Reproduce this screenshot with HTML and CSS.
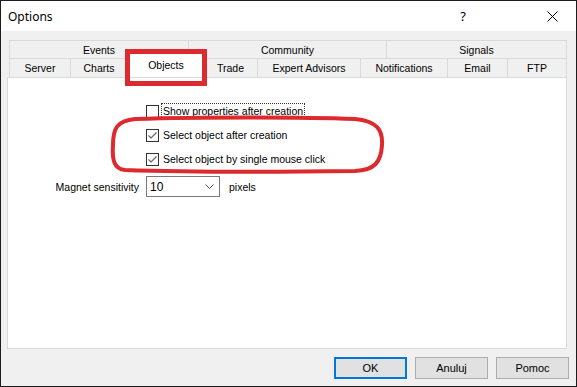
FILE: index.html
```html
<!DOCTYPE html>
<html lang="en">

<head>
    <meta charset="UTF-8">
    <title>Options</title>
    <link rel="stylesheet" href="styles.css">
</head>

<body>

    <div class="window">
        <div class="titlebar">
            <span class="title">Options</span>
            <span class="help">?</span>
            <svg class="close" width="11" height="11" viewBox="0 0 11 11">
                <path d="M0.5 0.5 L10.5 10.5 M10.5 0.5 L0.5 10.5" stroke="#000" stroke-width="1" fill="none"/>
            </svg>
        </div>

        <div class="client">
            <div class="tabs">
                <div class="tab-row back">
                    <div class="tab">Events</div>
                    <div class="tab">Community</div>
                    <div class="tab">Signals</div>
                </div>
                <div class="tab-row front">
                    <div class="tab">Server</div>
                    <div class="tab">Charts</div>
                    <div class="tab selected">Objects</div>
                    <div class="tab">Trade</div>
                    <div class="tab">Expert Advisors</div>
                    <div class="tab">Notifications</div>
                    <div class="tab">Email</div>
                    <div class="tab">FTP</div>
                </div>
            </div>

            <div class="panel">
                <div class="form">
                    <div class="check-row first">
                        <span class="box"></span>
                        <span class="label focus">Show properties after creation</span>
                    </div>
                    <div class="check-row">
                        <span class="box">
                            <svg width="11" height="11" viewBox="0 0 11 11">
                                <path d="M1.5 5.5 L4 8 L9.5 2.5" stroke="#666" stroke-width="1.2" fill="none"/>
                            </svg>
                        </span>
                        <span class="label">Select object after creation</span>
                    </div>
                    <div class="check-row">
                        <span class="box">
                            <svg width="11" height="11" viewBox="0 0 11 11">
                                <path d="M1.5 5.5 L4 8 L9.5 2.5" stroke="#666" stroke-width="1.2" fill="none"/>
                            </svg>
                        </span>
                        <span class="label">Select object by single mouse click</span>
                    </div>
                    <div class="magnet-row">
                        <span class="magnet-label">Magnet sensitivity</span>
                        <div class="combo">
                            <span>10</span>
                            <svg width="9" height="5" viewBox="0 0 9 5">
                                <path d="M0.5 0.5 L4.5 4.5 L8.5 0.5" stroke="#555" stroke-width="1" fill="none"/>
                            </svg>
                        </div>
                        <span class="unit">pixels</span>
                    </div>
                </div>
            </div>

            <div class="buttons">
                <button class="default">OK</button>
                <button>Anuluj</button>
                <button>Pomoc</button>
            </div>
        </div>

        <!-- red annotation marks drawn over the dialog -->
        <svg class="marks" width="577" height="387" viewBox="0 0 577 387">
            <rect x="127.5" y="51.5" width="77" height="32" stroke="#dc2a2f" stroke-width="5" fill="none"/>
            <path d="M135 119 C200 117, 300 117, 355 119 C377 121, 383 130, 382 145 C381 162, 375 170, 355 171 C280 172, 180 172, 125 170 C114 169, 112 160, 113 145 C113 128, 117 121, 135 119 Z"
                stroke="#dc2a2f" stroke-width="4" fill="none"/>
        </svg>
    </div>

</body>

</html>
```

FILE: styles.css
```css
body {
    margin: 0;
    font-family: "Liberation Sans", Arial, sans-serif;
    font-size: 10.5px;
    color: #000;
}

.window {
    position: relative;
    width: 577px;
    height: 387px;
    box-sizing: border-box;
    border: 1px solid #1c1c1c;
    display: flex;
    flex-direction: column;
    background: #f0f0f0;
}

.titlebar {
    height: 30px;
    background: #fff;
    display: flex;
    align-items: center;
}

.title {
    margin-left: 7px;
    font-family: "Noto Sans", sans-serif;
    font-size: 12px;
}

.help {
    margin-left: auto;
    font-family: "Noto Sans", sans-serif;
    font-size: 13px;
    margin-right: 81px;
}

.close {
    margin-right: 18px;
}

.client {
    flex: 1;
    display: flex;
    flex-direction: column;
}

.tabs {
    margin: 9px 0 0 8px;
    width: 557px;
}

.tab-row {
    display: grid;
    border-left: 1px solid #d9d9d9;
}

.tab-row.back {
    grid-template-columns: 179px 198px 180px;
    height: 18px;
}

.tab-row.front {
    grid-template-columns: 61px 57px 76px 54px 103px 87px 60px 59px;
    height: 19px;
}

.tab {
    border-top: 1px solid #d9d9d9;
    border-right: 1px solid #d9d9d9;
    display: flex;
    align-items: center;
    justify-content: center;
    box-sizing: border-box;
}

.tab.selected {
    position: relative;
    z-index: 1;
    height: 28px;
    margin: -9px -2px 0 -2px;
    background: #fff;
    border: 1px solid #d9d9d9;
    border-bottom: none;
    padding-top: 2px;
}

.panel {
    margin-left: 6px;
    width: 560px;
    height: 272px;
    box-sizing: border-box;
    background: #fff;
    border: 1px solid #d9d9d9;
}

.form {
    padding: 25px 0 0 138px;
}

.check-row {
    display: flex;
    align-items: center;
    height: 16px;
    margin-top: 8px;
}

.check-row.first {
    margin-top: 0;
}

.box {
    width: 13px;
    height: 13px;
    box-sizing: border-box;
    border: 1px solid #333;
    background: #fff;
    display: flex;
    align-items: center;
    justify-content: center;
}

.label {
    margin-left: 2px;
    padding: 0 1px;
    line-height: 14px;
    border: 1px solid transparent;
}

.label.focus {
    border: 1px dotted #333;
}

.magnet-row {
    display: flex;
    align-items: center;
    margin: 9px 0 0 -91px;
}

.magnet-label {
    width: 84px;
    margin-right: 7px;
    text-align: right;
    white-space: nowrap;
}

.combo {
    width: 74px;
    height: 21px;
    box-sizing: border-box;
    border: 1px solid #7a7a7a;
    background: #fff;
    display: flex;
    align-items: center;
    justify-content: space-between;
    padding: 0 5px 0 3px;
    font-size: 12px;
}

.unit {
    margin-left: 9px;
}

.buttons {
    display: flex;
    justify-content: flex-end;
    gap: 8px;
    margin: 8px 7px 0 0;
}

button {
    width: 73px;
    height: 22px;
    border: 1px solid #adadad;
    background: #e1e1e1;
    font-family: "Liberation Sans", Arial, sans-serif;
    font-size: 11px;
    color: #000;
    padding: 0;
}

button.default {
    border: 2px solid #0078d7;
}

.marks {
    position: absolute;
    z-index: 2;
    left: -1px;
    top: -1px;
    pointer-events: none;
}
```
